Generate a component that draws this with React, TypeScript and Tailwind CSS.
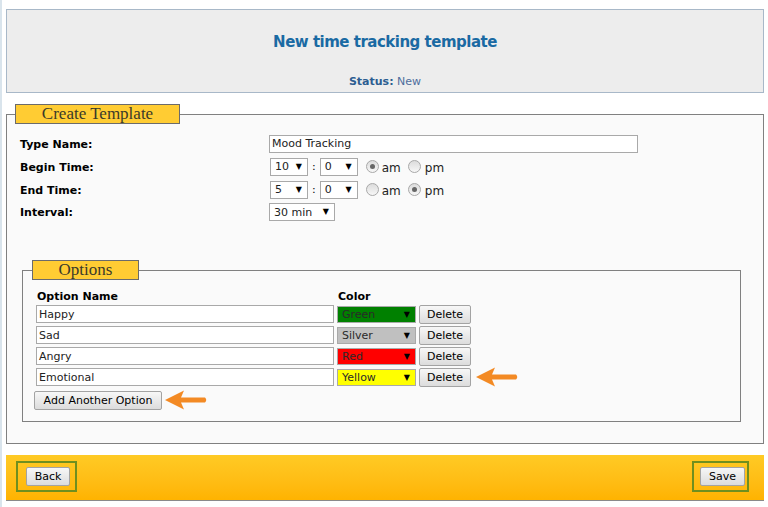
import React from "react";

const SANS = "font-['DejaVu_Sans',Verdana,sans-serif]";
const SERIF = "font-['Liberation_Serif',Georgia,serif]";

function Select({ value, width, bg = "bg-white" }: { value: string; width: string; bg?: string }) {
  return (
    <div
      className={`flex h-[18px] items-center justify-between border border-[#a9a9a9] pl-[4px] pr-[5px] pt-[2px] text-[11px] text-[#222] ${width} ${bg}`}
    >
      <span>{value}</span>
      <span className="mb-[2px] text-[8px] leading-none text-black">▼</span>
    </div>
  );
}

function Radio({ checked }: { checked?: boolean }) {
  return (
    <span className="flex h-[13px] w-[13px] items-center justify-center rounded-full border border-[#a8a8a8] bg-gradient-to-b from-[#dcdcdc] to-[#f7f7f7]">
      {checked ? <span className="h-[5px] w-[5px] rounded-full bg-[#666]" /> : null}
    </span>
  );
}

function Btn({ label, width }: { label: string; width: string }) {
  return (
    <button
      className={`flex h-[19px] items-center justify-center rounded-[2px] border border-[#a3a3a3] bg-gradient-to-b from-[#f7f7f7] to-[#dcdcdc] pt-[2px] text-[11px] text-black ${width}`}
    >
      {label}
    </button>
  );
}

function Arrow() {
  return (
    <svg width="44" height="20" viewBox="0 0 44 20">
      <path d="M1 10 L20 0.5 L17 7.5 L41 7.5 Q43.5 10 41 12.5 L17 12.5 L20 19.5 Z" fill="#f38a24" />
    </svg>
  );
}

function TimeRow({ hour, amChecked }: { hour: string; amChecked: boolean }) {
  return (
    <div className="flex items-center">
      <Select value={hour} width="w-[38px]" />
      <span className="mx-[4px] pt-[2px] text-[11px]">:</span>
      <Select value="0" width="w-[38px]" />
      <span className="ml-[8px]">
        <Radio checked={amChecked} />
      </span>
      <span className="ml-[3px] pt-[3px] text-[12px] text-[#222]">am</span>
      <span className="ml-[7px]">
        <Radio checked={!amChecked} />
      </span>
      <span className="ml-[4px] pt-[3px] text-[12px] text-[#222]">pm</span>
    </div>
  );
}

const OPTIONS = [
  { name: "Happy", color: "Green", bg: "bg-[#008000]" },
  { name: "Sad", color: "Silver", bg: "bg-[#c0c0c0]" },
  { name: "Angry", color: "Red", bg: "bg-[#ff0000]" },
  { name: "Emotional", color: "Yellow", bg: "bg-[#ffff00]" },
];

export default function App() {
  return (
    <div className={`min-h-[507px] border-l-2 border-[#d9e4ec] bg-white pl-[4px] pr-[4px] pt-[9px] ${SANS}`}>
      <div className="w-[758px]">
        {/* header */}
        <div className="flex h-[84px] flex-col items-center border border-[#a8b8c8] bg-[#ededed] pt-[23px]">
          <h1 className="h-[18px] text-[15px] font-bold leading-[18px] tracking-[-0.5px] text-[#1a6aa3]">
            New time tracking template
          </h1>
          <div className="mt-[24px] text-[11px] leading-[14px]">
            <span className="font-bold text-[#2c5d91]">Status:</span>{" "}
            <span className="text-[#4f6d9e]">New</span>
          </div>
        </div>

        {/* create template */}
        <fieldset className="mt-[11px] border border-[#808080] bg-[#fafafa] px-[8px] pb-[21px] pt-[8px]">
          <legend
            className={`flex h-[20px] w-[165px] items-center justify-center border border-[#6b6b6b] bg-[#ffcc33] text-[17px] text-[#3a3a2a] ${SERIF}`}
          >
            Create Template
          </legend>
          <div className="pl-[5px]">
            <div className="flex h-[23px] items-center">
              <span className="w-[249px] pt-[3px] text-[11px] font-bold text-black">Type Name:</span>
              <div className="flex h-[18px] w-[369px] items-center border border-[#a9a9a9] bg-white pl-[2px] pt-[2px] text-[11px] text-[#222]">
                Mood Tracking
              </div>
            </div>
            <div className="flex h-[23px] items-center">
              <span className="w-[250px] pt-[3px] text-[11px] font-bold text-black">Begin Time:</span>
              <TimeRow hour="10" amChecked />
            </div>
            <div className="flex h-[23px] items-center">
              <span className="w-[250px] pt-[3px] text-[11px] font-bold text-black">End Time:</span>
              <TimeRow hour="5" amChecked={false} />
            </div>
            <div className="flex h-[22px] items-center">
              <span className="w-[249px] pt-[3px] text-[11px] font-bold text-black">Interval:</span>
              <Select value="30 min" width="w-[66px]" />
            </div>
          </div>

          {/* options */}
          <fieldset className="ml-[7px] mr-[14px] mt-[37px] border border-[#808080] px-[9px] pb-[11px] pt-[8px]">
            <legend
              className={`flex h-[20px] w-[107px] items-center justify-center border border-[#6b6b6b] bg-[#ffcc33] text-[17px] text-[#3a3a2a] ${SERIF}`}
            >
              Options
            </legend>
            <div className="flex h-[16px] items-center pt-[2px] text-[11px] font-bold text-black">
              <span className="ml-[5px] w-[301px]">Option Name</span>
              <span>Color</span>
            </div>
            <div className="mt-[1px]">
              {OPTIONS.map((o, i) => (
                <div key={o.name} className="ml-[4px] flex h-[21px] items-start gap-[3px]">
                  <div className="flex h-[18px] w-[298px] items-center border border-[#a9a9a9] bg-white pl-[2px] pt-[2px] text-[11px] text-[#222]">
                    {o.name}
                  </div>
                  <div className="mt-[1px]">
                    <div
                      className={`flex h-[17px] w-[79px] items-center justify-between border border-[#a9a9a9] pl-[4px] pr-[5px] pt-[2px] text-[11px] text-[#2a2a2a] ${o.bg}`}
                    >
                      <span>{o.color}</span>
                      <span className="mb-[2px] text-[8px] leading-none text-black">▼</span>
                    </div>
                  </div>
                  <Btn label="Delete" width="w-[52px]" />
                  {i === 3 ? (
                    <span className="ml-[1px] mt-[-1px]">
                      <Arrow />
                    </span>
                  ) : null}
                </div>
              ))}
            </div>
            <div className="ml-[2px] mt-[2px] flex items-center gap-[2px]">
              <Btn label="Add Another Option" width="w-[128px]" />
              <span className="mt-[-2px]">
                <Arrow />
              </span>
            </div>
          </fieldset>
        </fieldset>

        {/* footer */}
        <div className="mt-[11px] flex h-[46px] items-start justify-between border-b border-[#8a8a8a] bg-gradient-to-b from-[#ffca24] to-[#ffb300] pl-[10px] pr-[15px] pt-[6px]">
          <div className="flex h-[31px] w-[61px] items-start border-2 border-[#6f8f1f] pl-[8px] pt-[4px]">
            <Btn label="Back" width="w-[44px]" />
          </div>
          <div className="flex h-[31px] w-[57px] items-start border-2 border-[#6f8f1f] pl-[6px] pt-[4px]">
            <Btn label="Save" width="w-[45px]" />
          </div>
        </div>
      </div>
    </div>
  );
}
